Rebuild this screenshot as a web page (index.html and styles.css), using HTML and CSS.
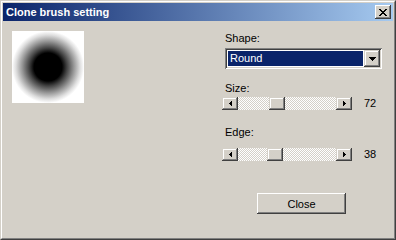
FILE: index.html
```html
<!DOCTYPE html>
<html>
<head>
<meta charset="utf-8">
<link rel="stylesheet" href="styles.css">
</head>
<body>
<div class="window">
  <div class="frame">
    <div class="titlebar">
      <span class="title">Clone brush setting</span>
      <span class="close-x">
        <svg width="8" height="7" viewBox="0 0 8 7"><path d="M0 0h2v1h-2zM6 0h2v1h-2zM1 1h2v1h-2zM5 1h2v1h-2zM2 2h4v1h-4zM3 3h2v1h-2zM2 4h4v1h-4zM1 5h2v1h-2zM5 5h2v1h-2zM0 6h2v1h-2zM6 6h2v1h-2z" fill="#000"/></svg>
      </span>
    </div>
    <div class="content">
      <div class="preview"><div class="brush"></div></div>
      <div class="controls">
        <div class="label label-shape">Shape:</div>
        <div class="combo">
          <div class="combo-field"><span class="combo-sel">Round</span></div>
          <div class="combo-btn">
            <svg width="7" height="4" viewBox="0 0 7 4"><path d="M0 0h7v1h-7zM1 1h5v1h-5zM2 2h3v1h-3zM3 3h1v1h-1z" fill="#000"/></svg>
          </div>
        </div>
        <div class="label label-size">Size:</div>
        <div class="slider-row">
          <div class="scrollbar">
            <div class="sb-btn"><svg width="3" height="5" viewBox="0 0 3 5"><path d="M2 0h1v5h-1zM1 1h1v3h-1zM0 2h1v1h-1z" fill="#000"/></svg></div>
            <div class="sb-track"><div class="sb-thumb thumb-size"></div></div>
            <div class="sb-btn"><svg width="3" height="5" viewBox="0 0 3 5"><path d="M0 0h1v5h-1zM1 1h1v3h-1zM2 2h1v1h-1z" fill="#000"/></svg></div>
          </div>
          <span class="value">72</span>
        </div>
        <div class="label label-edge">Edge:</div>
        <div class="slider-row slider-edge">
          <div class="scrollbar">
            <div class="sb-btn"><svg width="3" height="5" viewBox="0 0 3 5"><path d="M2 0h1v5h-1zM1 1h1v3h-1zM0 2h1v1h-1z" fill="#000"/></svg></div>
            <div class="sb-track"><div class="sb-thumb thumb-edge"></div></div>
            <div class="sb-btn"><svg width="3" height="5" viewBox="0 0 3 5"><path d="M0 0h1v5h-1zM1 1h1v3h-1zM2 2h1v1h-1z" fill="#000"/></svg></div>
          </div>
          <span class="value">38</span>
        </div>
        <div class="button-row">
          <div class="btn">Close</div>
        </div>
      </div>
    </div>
  </div>
</div>
</body>
</html>
```

FILE: styles.css
```css
html, body {
  margin: 0;
  padding: 0;
  background: #d4d0c8;
}
body {
  font-family: "Liberation Sans", Arial, sans-serif;
  font-size: 11px;
  color: #000;
}
.window {
  width: 396px;
  height: 240px;
  box-sizing: border-box;
  border: 1px solid;
  border-color: #d4d0c8 #404040 #404040 #d4d0c8;
  background: #d4d0c8;
}
.frame {
  height: 100%;
  box-sizing: border-box;
  border: 1px solid;
  border-color: #fff #808080 #808080 #fff;
  padding: 1px;
}
.titlebar {
  height: 18px;
  background: linear-gradient(to right, #0a246a, #a6caf0);
  display: flex;
  align-items: center;
  justify-content: space-between;
  padding: 0 2px 0 3px;
}
.title {
  color: #fff;
  font-weight: bold;
  font-size: 11px;
  line-height: 13px;
}
.close-x {
  width: 16px;
  height: 14px;
  box-sizing: border-box;
  background: #d4d0c8;
  box-shadow: inset -1px -1px #404040, inset 1px 1px #fff, inset -2px -2px #808080;
  display: flex;
  align-items: center;
  justify-content: center;
  padding-right: 1px;
}
.close-x svg { display: block; }
.content {
  display: flex;
  padding: 10px 0 0 9px;
}
.preview {
  width: 72px;
  height: 72px;
  background: #fff;
  flex: none;
}
.brush {
  width: 72px;
  height: 72px;
  background: radial-gradient(circle at 36px 36px, #000 0, #000 14px, #444 19px, #999 26px, #ddd 32px, #fff 36px);
}
.controls {
  margin-left: 141px;
  width: 160px;
  padding-top: 1px;
  display: flex;
  flex-direction: column;
}
.label {
  line-height: 13px;
  height: 13px;
}
.combo {
  margin-top: 3px;
  width: 157px;
  height: 21px;
  box-sizing: border-box;
  background: #fff;
  box-shadow: inset 1px 1px #808080, inset -1px -1px #fff, inset 2px 2px #404040, inset -2px -2px #d4d0c8;
  display: flex;
  padding: 2px;
}
.combo-field {
  flex: 1;
  padding: 1px;
  display: flex;
}
.combo-sel {
  flex: 1;
  background: #0a246a;
  color: #fff;
  line-height: 15px;
  padding-left: 2px;
}
.combo-btn {
  width: 16px;
  height: 17px;
  box-sizing: border-box;
  background: #d4d0c8;
  box-shadow: inset -1px -1px #404040, inset 1px 1px #d4d0c8, inset -2px -2px #808080, inset 2px 2px #fff;
  display: flex;
  align-items: center;
  justify-content: center;
}
.combo-btn svg { display: block; }
.label-size { margin-top: 13px; }
.label-edge { margin-top: 16px; }
.slider-row {
  display: flex;
  align-items: center;
  margin-top: 2px;
  height: 13px;
}
.slider-edge { margin-top: 9px; }
.scrollbar {
  margin-left: -3px;
  width: 130px;
  height: 13px;
  display: flex;
}
.sb-btn {
  width: 16px;
  height: 13px;
  box-sizing: border-box;
  background: #d4d0c8;
  box-shadow: inset -1px -1px #404040, inset 1px 1px #d4d0c8, inset -2px -2px #808080, inset 2px 2px #fff;
  display: flex;
  align-items: center;
  justify-content: center;
  flex: none;
}
.sb-btn svg { display: block; }
.sb-track {
  flex: 1;
  position: relative;
  background-color: #fff;
  background-image: repeating-conic-gradient(#d4d0c8 0 25%, #fff 0 50%);
  background-size: 2px 2px;
}
.sb-thumb {
  position: absolute;
  top: 0;
  width: 16px;
  height: 13px;
  box-sizing: border-box;
  background: #d4d0c8;
  box-shadow: inset -1px -1px #404040, inset 1px 1px #d4d0c8, inset -2px -2px #808080, inset 2px 2px #fff;
}
.thumb-size { left: 31px; }
.thumb-edge { left: 29px; }
.value {
  margin-left: 12px;
  line-height: 13px;
}
.button-row {
  margin-top: 32px;
  padding-left: 32px;
  display: flex;
}
.btn {
  width: 89px;
  height: 21px;
  box-sizing: border-box;
  background: #d4d0c8;
  box-shadow: inset -1px -1px #404040, inset 1px 1px #fff, inset -2px -2px #808080;
  display: flex;
  align-items: center;
  justify-content: center;
}
```
